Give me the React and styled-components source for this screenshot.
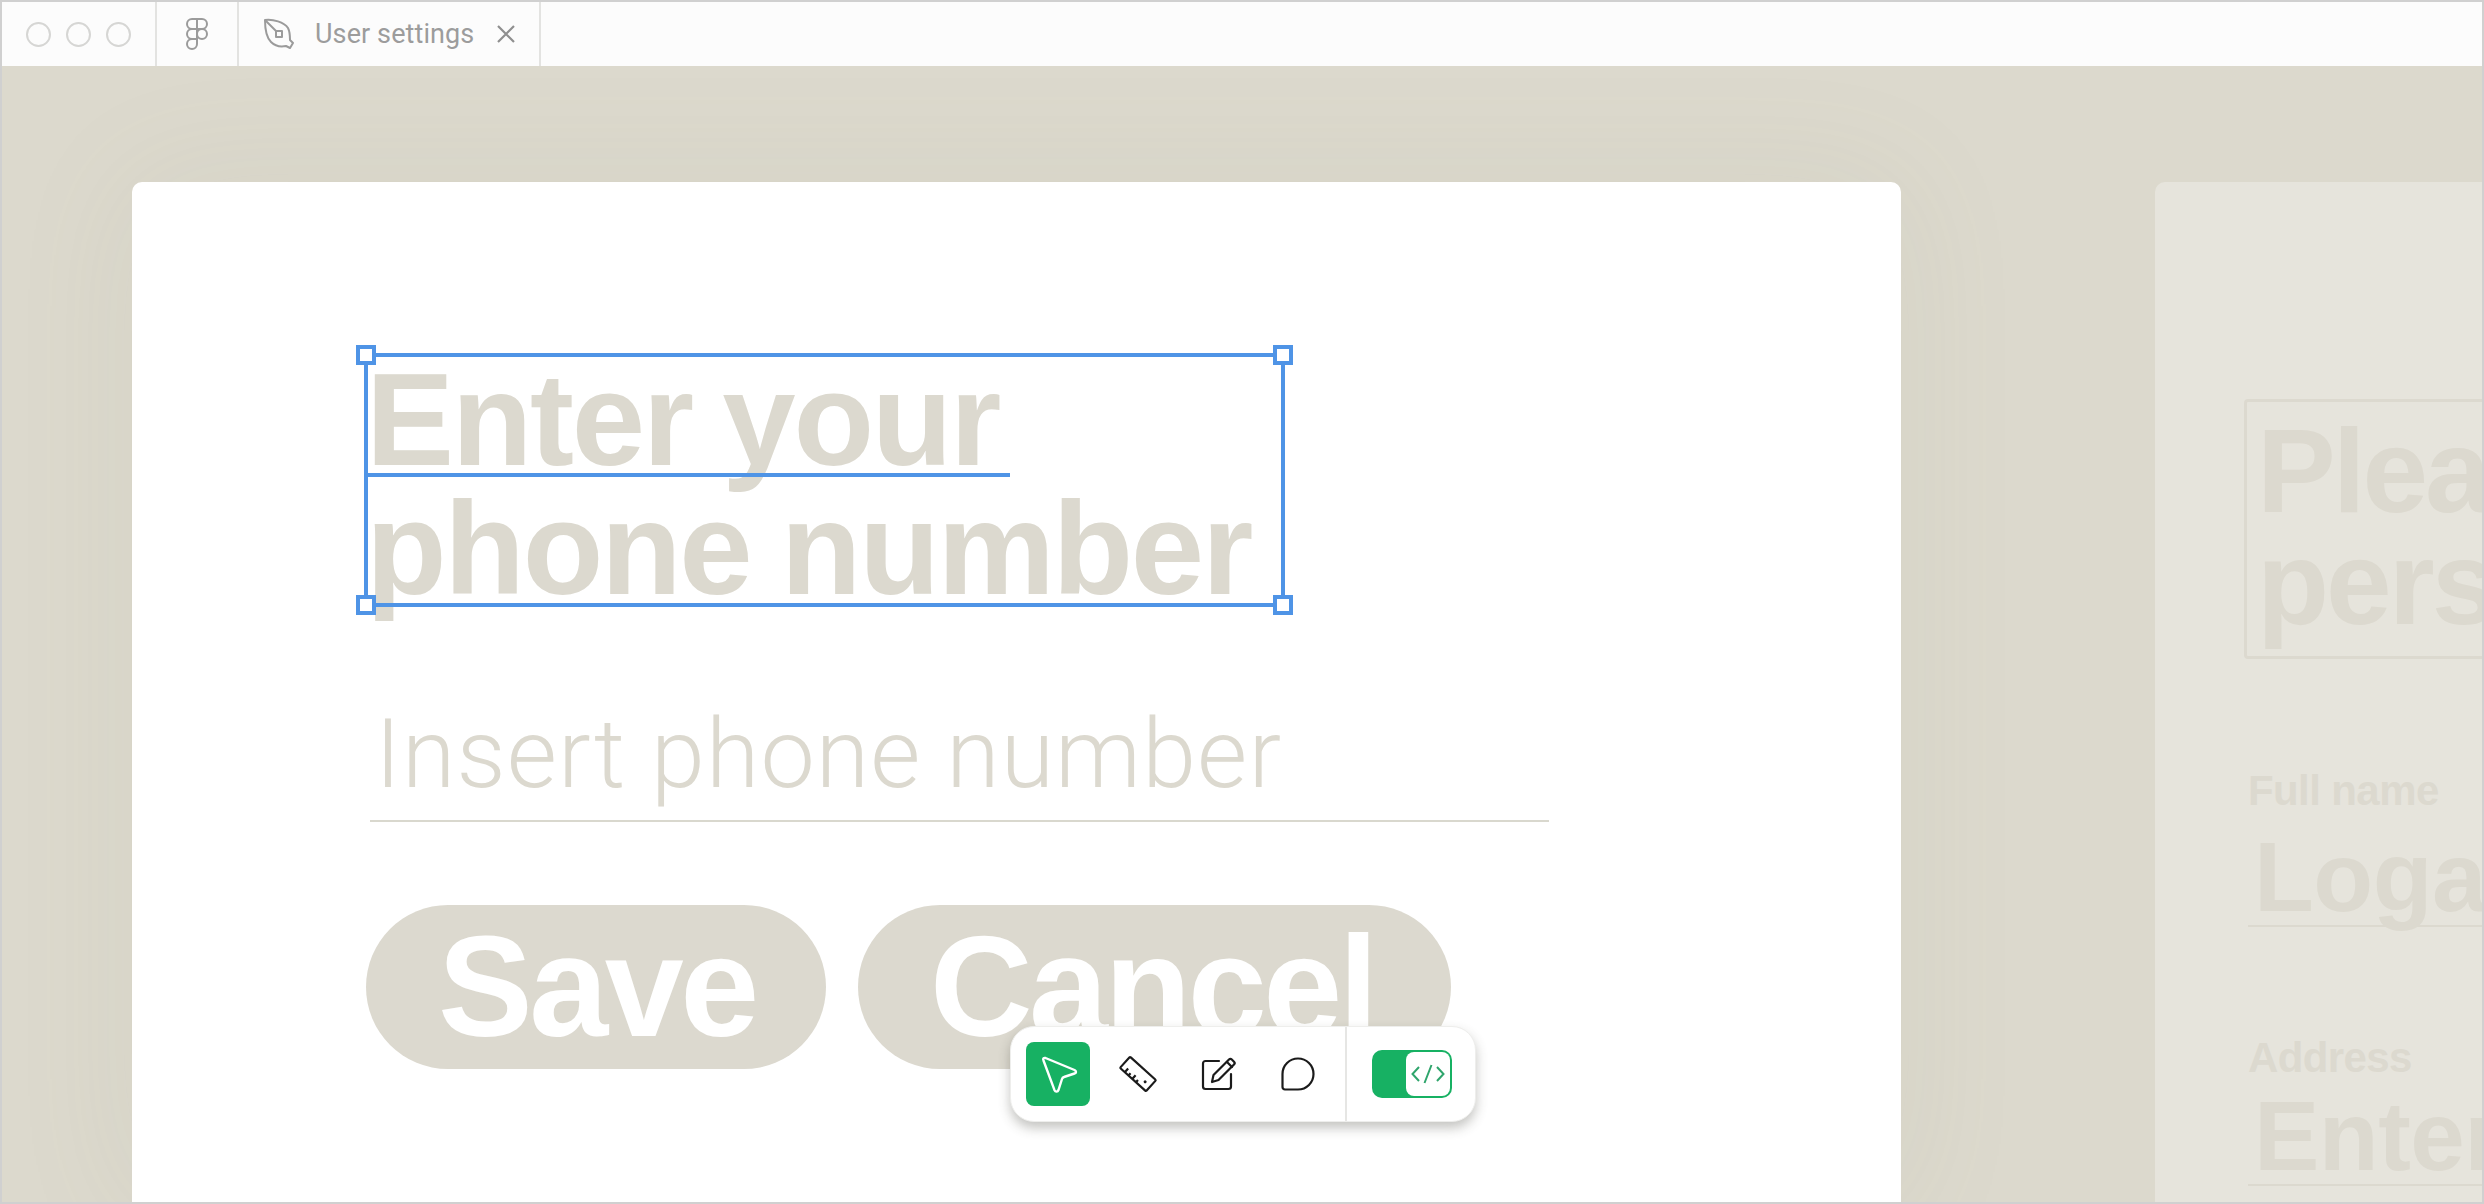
import React from 'react';
import styled, { createGlobalStyle } from 'styled-components';

const GlobalStyle = createGlobalStyle`
  html, body {
    margin: 0;
    padding: 0;
    background: #dcd9cd;
  }
  body {
    font-family: "Liberation Sans", Arial, sans-serif;
  }
`;

function App() {
  return (
    <>
      <GlobalStyle />
      <Frame>
        <TitleBar>
          <Lights>
            <Light />
            <Light />
            <Light />
          </Lights>
          <LogoTab>
            <FigmaIcon />
          </LogoTab>
          <FileTab>
            <PenIcon />
            <TabName>User settings</TabName>
            <CloseIcon />
          </FileTab>
        </TitleBar>
        <Canvas>
          <MainCard>
            <Heading>
              Enter your<br />phone number
              <Selection>
                <BaseLine />
                <Handle $x="left" $y="top" />
                <Handle $x="right" $y="top" />
                <Handle $x="left" $y="bottom" />
                <Handle $x="right" $y="bottom" />
              </Selection>
            </Heading>
            <PhoneField>Insert phone number</PhoneField>
            <Buttons>
              <PillButton $width={460}>Save</PillButton>
              <PillButton $width={593}>Cancel</PillButton>
            </Buttons>
            <Toolbar>
              <ToolGroup>
                <ToolButton $active><CursorIcon /></ToolButton>
                <ToolButton><RulerIcon /></ToolButton>
                <ToolButton><EditIcon /></ToolButton>
                <ToolButton><BubbleIcon /></ToolButton>
              </ToolGroup>
              <ToggleArea>
                <Toggle>
                  <ToggleKnob><CodeIcon /></ToggleKnob>
                </Toggle>
              </ToggleArea>
            </Toolbar>
          </MainCard>
          <SideCard>
            <SideHeading>Please enter your<br />personal details</SideHeading>
            <SideLabel $top={108}>Full name</SideLabel>
            <SideValue $gap={13}>Logan Carter</SideValue>
            <SideLabel $top={107}>Address</SideLabel>
            <SideValue $gap={5}>Enter address</SideValue>
          </SideCard>
        </Canvas>
      </Frame>
    </>
  );
}

function FigmaIcon() {
  return (
    <svg width="22" height="32" viewBox="0 0 22 32" fill="none" stroke="#9b9b9b" strokeWidth="2">
      <path d="M11 1H6a5 5 0 0 0 0 10h5z" />
      <path d="M11 1h5a5 5 0 0 1 0 10h-5z" />
      <path d="M11 11H6a5 5 0 0 0 0 10h5z" />
      <circle cx="16" cy="16" r="5" />
      <path d="M11 21H6a5 5 0 1 0 5 5z" />
    </svg>
  );
}

function PenIcon() {
  return (
    <svg width="32" height="32" viewBox="0 0 32 32" fill="none" stroke="#9b9b9b" strokeWidth="2" strokeLinejoin="round">
      <path d="M2 2C10 1 21 4 25 10c2 4 2 8 2 12l3 3-3 5-4-2c-5 1-11 0-15-4C3 19 2 10 2 2z" />
      <path d="M2 2l11 11" />
      <rect x="13" y="13" width="6" height="6" />
    </svg>
  );
}

function CloseIcon() {
  return (
    <svg width="20" height="20" viewBox="0 0 20 20" stroke="#8f8f8f" strokeWidth="2.2">
      <path d="M2 2l16 16M18 2L2 18" />
    </svg>
  );
}

function CursorIcon() {
  return (
    <svg width="64" height="64" viewBox="0 0 64 64" fill="none" stroke="#fff" strokeWidth="2.4" strokeLinejoin="round">
      <path d="M17.5 18.5c-1-2 .3-3 2-2.500L48.500 28c2 1 2 3 0 3.500L38 35c-1 .3-1.700 1-2 2l-3.500 11c-.8 2-3 2.200-4 .2z" />
    </svg>
  );
}

function RulerIcon() {
  return (
    <svg width="40" height="40" viewBox="0 0 40 40" fill="none" stroke="#1b1b1b" strokeWidth="2.200" strokeLinejoin="round">
      <g transform="rotate(42 20 20)">
        <rect x="2.500" y="12.500" width="35" height="15" rx="1" />
        <path d="M9 27.500v-5M14 27.500v-3M19 27.500v-5M24 27.500v-3" />
        <circle cx="30.500" cy="21" r="1.500" fill="#1b1b1b" stroke="none" />
      </g>
    </svg>
  );
}

function EditIcon() {
  return (
    <svg width="40" height="40" viewBox="0 0 40 40" fill="none" stroke="#1b1b1b" strokeWidth="2.200" strokeLinejoin="round" strokeLinecap="round">
      <path d="M21 7H7.500C6 7 5 8 5 9.500v23C5 34 6 35 7.500 35h23c1.500 0 2.500-1 2.500-2.500V20" />
      <path d="M14 28l1.500-7L31 5.500c.8-.8 2-.8 2.800 0l2.200 2.200c.8.8.8 2 0 2.800L20.500 26z" />
      <path d="M29 8l5 5" />
    </svg>
  );
}

function BubbleIcon() {
  return (
    <svg width="40" height="40" viewBox="0 0 40 40" fill="none" stroke="#1b1b1b" strokeWidth="2.200">
      <path d="M20 4.500a15.500 15.500 0 1 1 0 31H7c-1.500 0-2.500-1-2.500-2.500V20A15.500 15.500 0 0 1 20 4.500z" />
    </svg>
  );
}

function CodeIcon() {
  return (
    <svg width="34" height="24" viewBox="0 0 34 24" fill="none" stroke="#2fa56c" strokeWidth="2">
      <path d="M8 5L1.500 12 8 19M26 5l6.500 7-6.500 7M20.500 3l-7 18" />
    </svg>
  );
}

const Frame = styled.div`
  box-sizing: border-box;
  display: flex;
  flex-direction: column;
  width: 2484px;
  height: 1204px;
  border: 2px solid #d0d0d0;
  overflow: hidden;
  background: #dcd9cd;
`;

const TitleBar = styled.div`
  display: flex;
  flex: 0 0 64px;
  background: #fcfcfc;
`;

const Lights = styled.div`
  display: flex;
  align-items: center;
  gap: 15px;
  width: 155px;
  padding-left: 24px;
  box-sizing: border-box;
  border-right: 2px solid #e3e3e1;
`;

const Light = styled.span`
  box-sizing: border-box;
  width: 25px;
  height: 25px;
  border: 2px solid #d6d6d4;
  border-radius: 50%;
`;

const LogoTab = styled.div`
  display: flex;
  align-items: center;
  justify-content: center;
  box-sizing: border-box;
  width: 82px;
  border-right: 2px solid #e3e3e1;
`;

const FileTab = styled.div`
  display: flex;
  align-items: center;
  box-sizing: border-box;
  width: 302px;
  padding-left: 24px;
  border-right: 2px solid #e3e3e1;
`;

const TabName = styled.span`
  margin: 0 22px 0 20px;
  font-family: "Roboto", sans-serif;
  font-size: 27px;
  line-height: 32px;
  letter-spacing: 0.1px;
  color: #9c9c9c;
`;

const Canvas = styled.div`
  flex: 1;
  display: flex;
  align-items: stretch;
  padding: 116px 0 0 130px;
  overflow: hidden;
`;

const MainCard = styled.div`
  position: relative;
  flex: 0 0 1769px;
  box-sizing: border-box;
  padding: 171px 0 0 232px;
  background: #fff;
  border-radius: 10px 10px 0 0;
  box-shadow: 0 0 130px rgba(140, 135, 110, 0.08);
`;

const Heading = styled.h1`
  position: relative;
  box-sizing: border-box;
  width: 921px;
  height: 254px;
  margin: 0;
  padding: 2px 0 0 2px;
  font-size: 132px;
  font-weight: 700;
  line-height: 129px;
  letter-spacing: -2.3px;
  word-spacing: -4px;
  color: #dcd9cf;
  white-space: nowrap;
`;

const Selection = styled.div`
  position: absolute;
  inset: 0;
  border: 4px solid #4f94e6;
`;

const BaseLine = styled.span`
  position: absolute;
  left: -4px;
  top: 116px;
  width: 646px;
  height: 4px;
  background: #4f94e6;
`;

const Handle = styled.span`
  position: absolute;
  box-sizing: border-box;
  width: 20px;
  height: 20px;
  background: #fff;
  border: 4px solid #4f94e6;
  ${(p) => p.$x}: -12px;
  ${(p) => p.$y}: -12px;
`;

const PhoneField = styled.div`
  box-sizing: border-box;
  width: 1179px;
  height: 126px;
  margin: 89px 0 0 6px;
  padding-left: 5px;
  font-family: "Roboto", sans-serif;
  font-size: 97px;
  font-weight: 300;
  line-height: 116px;
  letter-spacing: 1.1px;
  color: #dcd9cf;
  white-space: nowrap;
  border-bottom: 2px solid #d9d8ce;
`;

const Buttons = styled.div`
  display: flex;
  gap: 32px;
  margin: 83px 0 0 2px;
`;

const PillButton = styled.button`
  box-sizing: border-box;
  width: ${(p) => p.$width}px;
  height: 164px;
  padding: 0 0 0 72px;
  border: none;
  border-radius: 82px;
  background: #dcd9cf;
  font-family: "Liberation Sans", Arial, sans-serif;
  font-size: 142px;
  font-weight: 700;
  letter-spacing: -3.5px;
  text-align: left;
  color: #fff;
`;

const Toolbar = styled.div`
  position: absolute;
  left: 878px;
  top: 844px;
  display: flex;
  width: 466px;
  height: 96px;
  box-sizing: border-box;
  background: #fff;
  border: 1px solid #eeeeec;
  border-radius: 24px;
  box-shadow: 0 6px 12px rgba(60, 60, 50, 0.3);
`;

const ToolGroup = styled.div`
  display: flex;
  align-items: center;
  flex: 0 0 336px;
  box-sizing: border-box;
  padding-left: 15px;
  gap: 16px;
  border-right: 2px solid #e6e6e4;
`;

const ToolButton = styled.div`
  display: flex;
  align-items: center;
  justify-content: center;
  flex: 0 0 64px;
  height: 64px;
  border-radius: 8px;
  background: ${(p) => (p.$active ? '#17b163' : 'transparent')};
`;

const ToggleArea = styled.div`
  flex: 1;
  display: flex;
  align-items: center;
  padding-left: 25px;
`;

const Toggle = styled.div`
  display: flex;
  justify-content: flex-end;
  box-sizing: border-box;
  width: 80px;
  height: 48px;
  padding: 2px;
  background: #17b163;
  border-radius: 10px;
`;

const ToggleKnob = styled.div`
  display: flex;
  align-items: center;
  justify-content: center;
  width: 44px;
  height: 44px;
  background: #fff;
  border-radius: 8px;
`;

const SideCard = styled.div`
  flex: 0 0 1000px;
  box-sizing: border-box;
  margin-left: 254px;
  padding: 217px 0 0 89px;
  background: #e6e4dc;
  border-radius: 10px 10px 0 0;
  white-space: nowrap;
`;

const SideHeading = styled.div`
  box-sizing: border-box;
  height: 260px;
  padding: 13px 0 0 10px;
  border: 3px solid #dcd9cf;
  border-radius: 4px;
  font-size: 118px;
  font-weight: 700;
  line-height: 112px;
  letter-spacing: -3px;
  color: #dcd9cf;
`;

const SideLabel = styled.div`
  margin: ${(p) => p.$top}px 0 0 4px;
  font-size: 42px;
  font-weight: 700;
  line-height: 48px;
  letter-spacing: -0.6px;
  color: #dcd9cf;
`;

const SideValue = styled.div`
  box-sizing: border-box;
  height: 99px;
  margin: ${(p) => p.$gap}px 0 0 4px;
  padding-left: 6px;
  font-size: 98px;
  font-weight: 700;
  line-height: 98px;
  letter-spacing: -0.5px;
  color: #dcd9cf;
  border-bottom: 2px solid #dcd9cf;
`;

export default App;
